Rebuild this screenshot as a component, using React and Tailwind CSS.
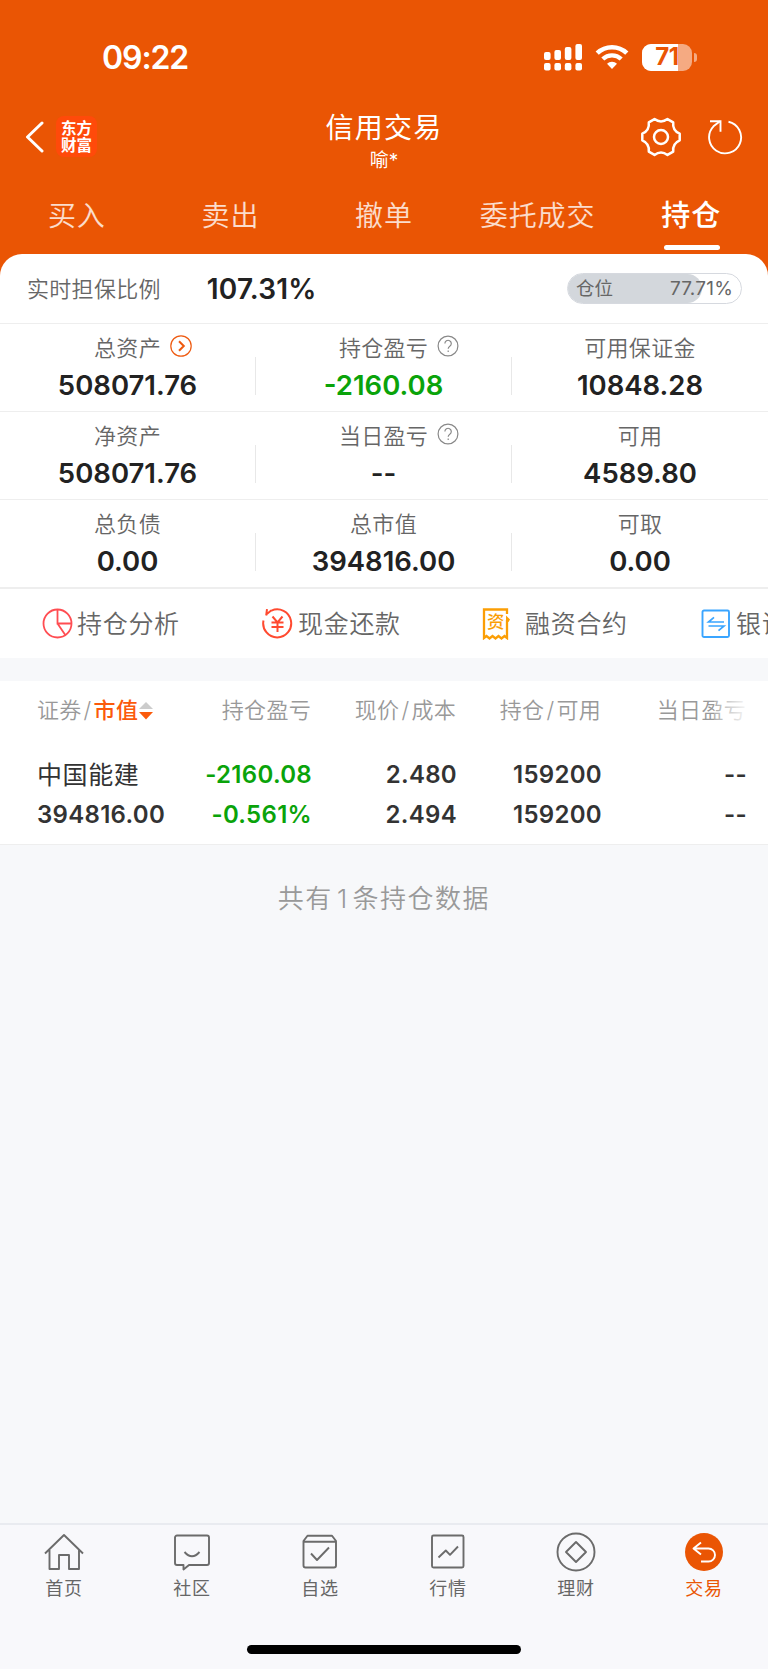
import clsx from "clsx";

const tabs = ["买入", "卖出", "撤单", "委托成交", "持仓"];

const summary = [
  [
    { label: "总资产", value: "508071.76", icon: "arrow" },
    { label: "持仓盈亏", value: "-2160.08", icon: "help", green: true },
    { label: "可用保证金", value: "10848.28" },
  ],
  [
    { label: "净资产", value: "508071.76" },
    { label: "当日盈亏", value: "--", icon: "help" },
    { label: "可用", value: "4589.80" },
  ],
  [
    { label: "总负债", value: "0.00" },
    { label: "总市值", value: "394816.00" },
    { label: "可取", value: "0.00" },
  ],
];

function StatusBar() {
  return (
    <div className="flex h-[100px] items-center justify-between pt-[14px] pr-[71px] pl-[102px]">
      <span className="pt-[1px] text-[32px] leading-[36px] font-semibold tracking-[-1.1px]">09:22</span>
      <div className="flex items-center">
        <svg width="38" height="27" viewBox="0 0 38 27" fill="currentColor">
          <rect x="0" y="8" width="6.6" height="8" rx="2" />
          <rect x="10.4" y="6" width="6.6" height="10" rx="2" />
          <rect x="20.8" y="3" width="6.6" height="13" rx="2" />
          <rect x="31.4" y="0" width="6.6" height="16" rx="2" />
          <rect x="0" y="19" width="6.6" height="7.4" rx="2" />
          <rect x="10.4" y="19" width="6.6" height="7.4" rx="2" />
          <rect x="20.8" y="19" width="6.6" height="7.4" rx="2" />
          <rect x="31.4" y="19" width="6.6" height="7.4" rx="2" />
        </svg>
        <svg className="ml-[13px]" width="34" height="26" viewBox="0 0 34 26" fill="none" stroke="currentColor">
          <path d="M2.2 9.2a21.5 21.5 0 0 1 29.6 0" strokeWidth="4.6" />
          <path d="M7.8 15a13.4 13.4 0 0 1 18.4 0" strokeWidth="4.4" />
          <path d="M17 25l-5-5.2a7.2 7.2 0 0 1 10 0z" fill="currentColor" stroke="none" />
        </svg>
        <div className="relative ml-[13px] flex h-[27px] w-[50px] items-center justify-center overflow-hidden rounded-[9px] bg-white/50">
          <div className="absolute inset-y-0 left-0 w-[36px] bg-white" />
          <span className="relative text-[24px] leading-none font-bold tracking-[-0.3px] text-[#ea5504]">71</span>
        </div>
        <div className="ml-[2px] h-[9px] w-[3px] rounded-r-full bg-white/50" />
      </div>
    </div>
  );
}

function NavBar() {
  return (
    <div className="flex h-[88px] justify-between pr-[25px] pl-[25px]">
      <div className="flex w-[140px] items-start pt-[16px]">
        <svg className="mt-[5px]" width="19" height="32" viewBox="0 0 19 32" fill="none" stroke="currentColor" strokeWidth="3">
          <path d="M17 2L2.500 16l14.500 14" strokeLinecap="round" strokeLinejoin="round" />
        </svg>
        <div className="ml-[12px] flex size-[41px] flex-col items-center justify-center rounded-[8px] bg-[#ff4a0a] text-[15.5px] leading-[17px] font-bold">
          <span>东方</span>
          <span>财富</span>
        </div>
      </div>
      <div className="flex flex-col items-center pt-[10px]">
        <h1 className="text-[28px] leading-[36px] tracking-[1.2px]">信用交易</h1>
        <p className="mt-[3px] text-[19px] leading-[24px]">喻*</p>
      </div>
      <div className="flex w-[140px] items-start justify-end gap-[26px] pt-[17px]">
        <svg width="40" height="40" viewBox="0 0 40 40" fill="none" stroke="currentColor" strokeWidth="2.5" strokeLinejoin="round">
          <circle cx="20" cy="20" r="7" />
          <path d="M13.500 2.100Q20 7 26.500 2.100L32.200 5.400Q31.300 13.500 38.700 16.700V23.300Q31.300 26.500 32.200 34.600L26.500 37.900Q20 33 13.500 37.900L7.800 34.600Q8.700 26.500 1.300 23.300V16.700Q8.700 13.500 7.800 5.400Z" />
        </svg>
        <svg width="36" height="40" viewBox="0 0 36 40" fill="none" stroke="currentColor" strokeWidth="1.900">
          <path d="M21.500 4.700A16 16 0 1 1 6.500 9.300L13 4.200" />
          <path d="M3 4.200H13.500V14.800" />
        </svg>
      </div>
    </div>
  );
}

function Tabs() {
  return (
    <div className="grid h-[66px] grid-cols-5">
      {tabs.map((tab, i) => (
        <div key={tab} className="flex flex-col items-center pt-[10px]">
          <span
            className={clsx(
              "leading-[36px]",
              i === 4 ? "text-[29px] font-medium tracking-[1px]" : "text-[28px] font-[350] tracking-[0.9px] text-white/80"
            )}
          >
            {tab}
          </span>
          {i === 4 && <i className="mt-[11px] ml-[1px] h-[5px] w-[56px] rounded-full bg-white" />}
        </div>
      ))}
    </div>
  );
}

function LabelIcon({ type }) {
  if (type === "arrow") {
    return (
      <svg className="ml-[9px]" width="22" height="22" viewBox="0 0 22 22" fill="none" stroke="#ee5a10">
        <circle cx="11" cy="11" r="10.200" strokeWidth="1.200" />
        <path d="M9 6.200l4.800 4.800L9 15.800" strokeWidth="2" />
      </svg>
    );
  }
  return (
    <svg className="ml-[9px]" width="22" height="22" viewBox="0 0 22 22" fill="none" stroke="#888" strokeWidth="1.200">
      <circle cx="11" cy="11" r="9.900" />
      <path d="M7.900 8.600a3.200 3.200 0 1 1 4.900 2.600c-1.200.8-1.600 1.300-1.600 2.600M11.200 15.400v1.500" />
    </svg>
  );
}

function Summary() {
  return (
    <div className="rounded-t-[22px] bg-white">
      <div className="flex h-[69px] items-center pr-[26px] pl-[27px]">
        <span className="pt-[1px] text-[22px] font-[350] tracking-[0.3px] text-[#666]">实时担保比例</span>
        <b className="ml-[46px] pt-[1px] text-[28px] font-semibold tracking-[0.2px] text-[#222]">107.31%</b>
        <div className="relative ml-auto flex h-[31px] w-[175px] items-center justify-between overflow-hidden rounded-full border-[1.5px] border-[#d6d9df] px-[8px] text-[#666]">
          <div className="absolute inset-y-0 left-0 w-[134px] rounded-r-full bg-[#d3d7dc]" />
          <span className="relative text-[18.5px]">仓位</span>
          <span className="relative pt-[1px] text-[19px] tracking-[0.2px]">77.71%</span>
        </div>
      </div>
      {summary.map((row, r) => (
        <div key={r} className="grid h-[88px] grid-cols-3 border-t border-[#eee]">
          {row.map((cell, c) => (
            <div key={cell.label} className="flex">
              <div className="flex flex-1 flex-col items-center pt-[10px]">
                <div className="flex h-[28px] items-center">
                  <span className="text-[22px] leading-[28px] font-[350] tracking-[0.3px] text-[#666]">{cell.label}</span>
                  {cell.icon && (
                    <span className="-mt-[4px] -mr-[31px]">
                      <LabelIcon type={cell.icon} />
                    </span>
                  )}
                </div>
                <b
                  className={clsx(
                    "mt-[5px] text-[27.5px] leading-[36px] font-semibold",
                    cell.green ? "text-[#0aa30a]" : "text-[#222]"
                  )}
                >
                  {cell.value}
                </b>
              </div>
              {c < 2 && <i className="mt-[33px] h-[38px] w-px bg-[#e8e8e8]" />}
            </div>
          ))}
        </div>
      ))}
    </div>
  );
}

function Actions() {
  return (
    <div className="flex h-[71px] items-center overflow-hidden border-t-2 border-[#eee] bg-white pl-[42px] text-[25px] font-[350] tracking-[0.7px] whitespace-nowrap text-[#666]">
      <div className="flex w-[220px] shrink-0 items-center">
        <svg width="31" height="31" viewBox="0 0 31 31" fill="none" stroke="#ff4d52" strokeWidth="1.800">
          <circle cx="15.500" cy="15.500" r="14" />
          <path d="M15.500 1.500V15.500H29.500M15.500 15.500L23.300 27" />
        </svg>
        <span className="ml-[4px] pt-[2px]">持仓分析</span>
      </div>
      <div className="flex w-[220px] shrink-0 items-center">
        <svg width="31" height="31" viewBox="0 0 31 31" fill="none" stroke="#ff4a30" strokeWidth="2">
          <path d="M1.500 12.500A14 14 0 1 0 9.500 2.600M4.200 7.500L5 1.200M4.200 6.500L9.500 2.300" />
          <path d="M10.500 8.500l5 6 5-6M9.500 14.500h12M9.500 19h12M15.500 14.500v9.500" />
        </svg>
        <span className="ml-[5px] pt-[2px]">现金还款</span>
      </div>
      <div className="flex w-[219px] shrink-0 items-center">
        <div className="relative h-[32px] w-[31px]">
          <svg width="31" height="32" viewBox="0 0 31 32" fill="none" stroke="#fb9e05" strokeWidth="2.300">
            <path d="M25 6V1.500H2V30L4.500 28 7.500 30.500 10.500 28 13.500 30.500 16.500 28 19.500 30.500 22.500 28 25 30V12" />
            <path d="M24 7.500L28 11.500 26.500 14H24z" fill="#fb9e05" stroke="none" />
          </svg>
          <span className="absolute top-[4px] left-[5px] text-[17.5px] leading-[20px] font-medium tracking-normal text-[#fb9e05]">资</span>
        </div>
        <span className="ml-[12px] pt-[2px]">融资合约</span>
      </div>
      <div className="flex shrink-0 items-center">
        <svg width="30" height="30" viewBox="0 0 30 30" fill="none" stroke="#3aa5ff" strokeWidth="1.900">
          <rect x="1.500" y="1.500" width="26.500" height="26.500" rx="1.500" />
          <path d="M23 13H7.500L13 8.300M7.500 17H23L17.500 21.700" strokeWidth="1.700" />
        </svg>
        <span className="ml-[5px] pt-[2px]">银证转账</span>
      </div>
    </div>
  );
}

function Cell({ children, green }) {
  return (
    <b className={clsx("text-right text-[24px] leading-[40px] font-semibold tracking-[0.3px]", green ? "text-[#0aa30a]" : "text-[#333]")}>
      {children}
    </b>
  );
}

function Slash() {
  return <span className="px-[2px]">/</span>;
}

function Positions() {
  return (
    <div className="h-[164px] border-b border-[#eee] bg-white pr-[21px] pl-[37px]">
      <div className="grid grid-cols-[129px_145px_145px_145px_145px] pt-[14px] text-right text-[22px] leading-[30px] font-[350] tracking-[0.3px] text-[#999]">
        <div className="flex items-center">
          证券
          <Slash />
          <span className="font-medium text-[#fb5a0b]">市值</span>
          <svg className="ml-[1px]" width="14" height="19" viewBox="0 0 14 19">
            <path d="M0 8L7 1L14 8z" fill="#ccc" />
            <path d="M0 11L7 18.500L14 11z" fill="#fb5a0b" />
          </svg>
        </div>
        <span>持仓盈亏</span>
        <span>现价<Slash />成本</span>
        <span>持仓<Slash />可用</span>
        <div className="relative">
          当日盈亏
          <i className="absolute inset-y-0 right-0 w-[32px] bg-gradient-to-r from-white/20 to-white/90" />
        </div>
      </div>
      <div className="mt-[30px] grid grid-cols-[130px_145px_145px_145px_145px]">
        <span className="text-[25px] leading-[40px] tracking-[0.6px] whitespace-nowrap text-[#333]">中国能建</span>
        <Cell green>-2160.08</Cell>
        <Cell>2.480</Cell>
        <Cell>159200</Cell>
        <Cell>--</Cell>
        <b className="text-[24px] leading-[40px] font-semibold tracking-[0.3px] text-[#333]">394816.00</b>
        <Cell green>-0.561%</Cell>
        <Cell>2.494</Cell>
        <Cell>159200</Cell>
        <Cell>--</Cell>
      </div>
    </div>
  );
}

const navItems = [
  {
    label: "首页",
    icon: <path d="M1 21.500L20 3 39 21.500M5.500 18V37H15V23H25V37H35V18" />,
  },
  {
    label: "社区",
    icon: (
      <>
        <path d="M5 3.500H35a2 2 0 0 1 2 2V31a2 2 0 0 1-2 2H17L11.500 37.500V33H5a2 2 0 0 1-2-2V5.500a2 2 0 0 1 2-2z" />
        <path d="M12.500 20q7.500 8.500 15 0" />
      </>
    ),
  },
  {
    label: "自选",
    icon: (
      <>
        <path d="M3.500 9L7.500 3.700H32L36 9V33.500a2 2 0 0 1-2 2H5.500a2 2 0 0 1-2-2zM3.500 9.700H36" />
        <path d="M11 21.500L17 28 29 15.500" />
      </>
    ),
  },
  {
    label: "行情",
    icon: (
      <>
        <rect x="4" y="3.500" width="31.500" height="32" rx="1.500" />
        <path d="M10.500 25.500L17.800 18.500 22 22.800 30 14.500" />
      </>
    ),
  },
  {
    label: "理财",
    icon: (
      <>
        <circle cx="20" cy="20" r="18.500" />
        <path d="M20 10L30 20 20 30 10 20z" />
      </>
    ),
  },
  {
    label: "交易",
    active: true,
    icon: (
      <>
        <circle cx="20" cy="20" r="19" fill="#ea5504" stroke="none" />
        <path d="M17 10.500L9.500 16.500 17 22.500M10 16.500H24.500a6.500 6.500 0 0 1 0 13H17" stroke="#fff" />
      </>
    ),
  },
];

function BottomNav() {
  return (
    <div className="mt-auto h-[146px] border-t-2 border-[#e9ebf0] bg-[#f8f8fb]">
      <div className="grid h-[120px] grid-cols-6">
        {navItems.map((item) => (
          <div key={item.label} className="flex flex-col items-center pt-[7px]">
            <svg width="40" height="40" viewBox="0 0 40 40" fill="none" stroke="#6b6b6b" strokeWidth="1.900" strokeLinejoin="round">
              {item.icon}
            </svg>
            <span
              className={clsx(
                "mt-[5px] text-[18px] leading-[24px] tracking-[0.8px]",
                item.active ? "text-[#ea5504]" : "text-[#666]"
              )}
            >
              {item.label}
            </span>
          </div>
        ))}
      </div>
      <div className="mx-auto h-[9px] w-[274px] rounded-full bg-black" />
    </div>
  );
}

export default function App() {
  return (
    <div className="flex h-[1669px] w-[768px] flex-col overflow-hidden bg-[#f7f8fa] font-['Inter','Noto_Sans_CJK_SC',sans-serif]">
      <div className="bg-[#ea5504] text-white">
        <StatusBar />
        <NavBar />
        <Tabs />
        <Summary />
      </div>
      <Actions />
      <div className="h-[23px] shrink-0" />
      <Positions />
      <p className="mt-[34px] text-center text-[26px] leading-[40px] font-[350] tracking-[1.5px] text-[#999]">
        共有<span className="px-[4px]">1</span>条持仓数据
      </p>
      <BottomNav />
    </div>
  );
}
